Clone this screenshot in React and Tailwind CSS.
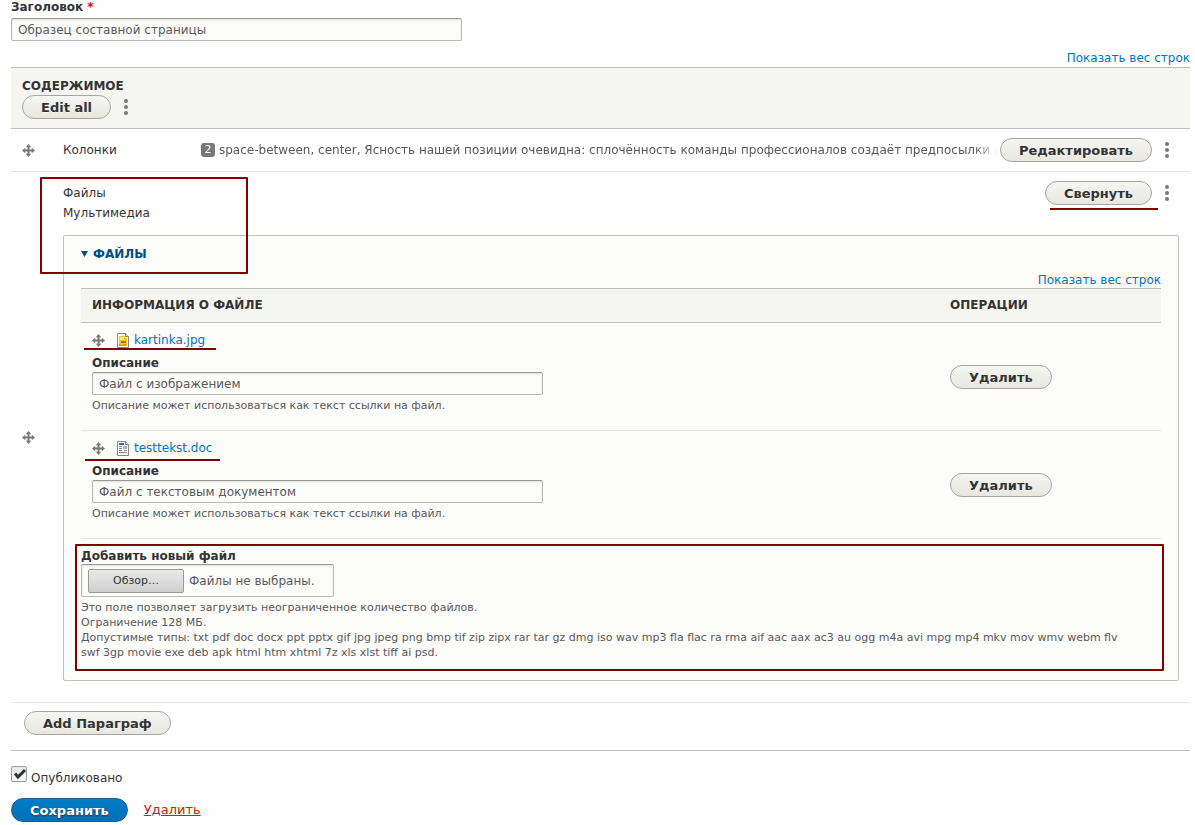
import { useRef } from 'react';
import clsx from 'clsx';

const files = [
    { id: 'kartinka', name: 'kartinka.jpg', kind: 'image', description: 'Файл с изображением', mark: 'top-[25px] left-[3px] w-[132px]' },
    { id: 'testtekst', name: 'testtekst.doc', kind: 'doc', description: 'Файл с текстовым документом', mark: 'top-7 left-1 w-[135px]' },
];

function Button({ primary, className, children, ...props }) {
    return (
        <button
            type="button"
            className={clsx(
                'h-6 shrink-0 rounded-full border px-[18px] pt-px text-[13px] leading-[21px] font-bold whitespace-nowrap cursor-pointer',
                primary
                    ? 'border-[#1e5c90] bg-linear-to-b from-[#007bc6] to-[#0071b8] text-white text-shadow-[0_1px_2px_rgba(0,0,0,0.5)]'
                    : 'border-[#a6a6a6] bg-linear-to-b from-[#f6f6f3] to-[#e7e7df] text-[#333] text-shadow-[0_1px_0_rgba(255,255,255,0.6)]',
                className
            )}
            {...props}
        >
            {children}
        </button>
    );
}

function MoreButton() {
    return (
        <button type="button" aria-label="Ещё" className="flex h-6 w-4 shrink-0 items-center justify-center cursor-pointer">
            <svg width="4" height="16" viewBox="0 0 4 16" fill="#787878">
                <circle cx="2" cy="2" r="2" />
                <circle cx="2" cy="8" r="2" />
                <circle cx="2" cy="14" r="2" />
            </svg>
        </button>
    );
}

function DragHandle() {
    return (
        <a href="#drag" aria-label="Переместить" className="inline-block cursor-move align-middle">
            <svg width="13" height="13" viewBox="0 0 13 13" className="block">
                <path d="M2 6.5h9M6.5 2v9" stroke="#787878" strokeWidth="2" />
                <path d="M6.5 0 9.2 3.2H3.8zM6.5 13 3.8 9.8h5.4zM0 6.5 3.2 3.8v5.4zM13 6.5 9.8 9.2V3.8z" fill="#787878" />
            </svg>
        </a>
    );
}

function FileIcon({ kind }) {
    return (
        <svg width="12" height="15" viewBox="0 0 12 15" className="shrink-0">
            <path d="M.5.5h8l3 3v11H.5z" fill="#fff" stroke="#858585" />
            <path d="M8.5.5v3h3" fill="#ddd" stroke="#858585" />
            {kind === 'image' ? (
                <>
                    <path d="M2 3h6v2h2v8H2z" fill="#f3c817" />
                    <path d="M3 4h4v3H3z" fill="#fbe88a" />
                    <path d="M4 8h5v2H4z" fill="#a8741a" />
                    <path d="M2 11l2 1 3-1 3 1v1H2z" fill="#d99a08" />
                </>
            ) : (
                <>
                    <path d="M2 2h5v2H2z" fill="#1a73c8" />
                    <path d="M2 5.5h3M2 7.5h3M2 9.5h3M2 11.5h8M7 9.5h3" stroke="#8a8a8a" />
                    <path d="M6 5h4v3H6z" fill="#9fb4cc" />
                </>
            )}
        </svg>
    );
}

function TextInput({ id, value }) {
    return (
        <input
            id={id}
            type="text"
            defaultValue={value}
            className="block h-[23px] w-[451px] max-w-full rounded-xs border border-[#b8b8b8] border-t-[#999] bg-[#fcfcfa] px-1.5 text-[12px] text-[#595959] shadow-[inset_0_1px_2px_rgba(0,0,0,0.12)]"
        />
    );
}

function WeightToggle() {
    return (
        <div className="text-right leading-4">
            <a href="#weights" className="text-[#0074bd]">Показать вес строк</a>
        </div>
    );
}

function FileRow({ file }) {
    return (
        <tr className="border-b border-[#e6e4df]">
            <td className="relative px-[11px] pt-2 pb-[17px]">
                <div className="flex h-[18px] items-center">
                    <DragHandle />
                    <span className="ml-3 flex items-center gap-[5px]">
                        <FileIcon kind={file.kind} />
                        <a href={`#${file.id}`} className="text-[#0074bd]">{file.name}</a>
                    </span>
                </div>
                <div className={clsx('absolute h-0.5 bg-[#800000]', file.mark)} />
                <label htmlFor={file.id} className="mt-[5px] block w-fit leading-[18px] font-bold">Описание</label>
                <TextInput id={file.id} value={file.description} />
                <p className="mt-[3px] text-[11px] leading-[15px] text-[#595959]">
                    Описание может использоваться как текст ссылки на файл.
                </p>
            </td>
            <td className="px-[11px] align-middle">
                <Button>Удалить</Button>
            </td>
        </tr>
    );
}

function UploadField() {
    const inputRef = useRef(null);

    return (
        <div className="relative mt-[9px]">
            <label htmlFor="upload" className="block w-fit leading-4 font-bold">Добавить новый файл</label>
            <div className="flex h-[33px] w-[253px] items-center rounded-xs border border-[#b8b8b8] border-t-[#999] px-1.5 text-[#595959] shadow-[inset_0_1px_2px_rgba(0,0,0,0.12)]">
                <input ref={inputRef} id="upload" type="file" multiple className="hidden" />
                <button
                    type="button"
                    onClick={() => inputRef.current.click()}
                    className="mr-[5px] h-6 w-24 rounded-xs border border-[#999] bg-linear-to-b from-[#e9e9e9] to-[#cfcfcf] pt-px text-[11px] text-[#333]"
                >
                    Обзор…
                </button>
                Файлы не выбраны.
            </div>
            <div className="mt-[3px] pr-6 text-[11px] leading-[15px] text-[#595959]">
                <p>Это поле позволяет загрузить неограниченное количество файлов.</p>
                <p>Ограничение 128 МБ.</p>
                <p>
                    Допустимые типы: txt pdf doc docx ppt pptx gif jpg jpeg png bmp tif zip zipx rar tar gz dmg iso wav mp3 fla flac ra rma aif aac aax ac3 au ogg m4a avi mpg mp4 mkv mov wmv webm flv swf 3gp movie exe deb apk html htm xhtml 7z xls xlst tiff ai psd.
                </p>
            </div>
            <div className="pointer-events-none absolute -top-1 -right-[3px] -bottom-[11px] -left-1.5 rounded-[1px] border-2 border-[#800000]" />
        </div>
    );
}

function FilesPanel() {
    return (
        <details open className="mt-3 rounded-xs border border-[#bfbfbf] bg-[#fcfcfa] px-[17px] pb-5">
            <summary className="flex h-9 cursor-pointer list-none items-center gap-[5px] font-bold text-[#004f80] uppercase">
                <svg width="7" height="6" viewBox="0 0 7 6" fill="#004f80">
                    <path d="M0 0h7L3.5 6z" />
                </svg>
                Файлы
            </summary>
            <WeightToggle />
            <table className="w-full border-collapse">
                <thead>
                    <tr className="border-y border-[#bfbfba] bg-[#f5f5f2] text-left leading-[33px] uppercase">
                        <th className="px-[11px]">Информация о файле</th>
                        <th className="w-[222px] px-[11px]">Операции</th>
                    </tr>
                </thead>
                <tbody>
                    {files.map((file) => (
                        <FileRow key={file.id} file={file} />
                    ))}
                </tbody>
            </table>
            <UploadField />
        </details>
    );
}

function ContentTable() {
    return (
        <table className="w-full table-fixed border-collapse">
            <colgroup>
                <col className="w-[52px]" />
                <col />
            </colgroup>
            <thead>
                <tr className="border-y border-[#bfbfba] bg-[#f5f5f2] text-left">
                    <th colSpan={2} className="px-[11px] py-[9px]">
                        <div className="leading-[18px] uppercase">Содержимое</div>
                        <div className="flex items-center gap-[7px]">
                            <Button>Edit all</Button>
                            <MoreButton />
                        </div>
                    </th>
                </tr>
            </thead>
            <tbody>
                <tr className="border-b border-[#e6e4df]">
                    <td className="pl-[11px]">
                        <DragHandle />
                    </td>
                    <td className="py-[9px] pr-[15px]">
                        <div className="flex items-center">
                            <div className="w-[138px] shrink-0">Колонки</div>
                            <div className="flex min-w-0 flex-1 items-center gap-1 overflow-hidden text-[#595959] mask-r-from-[calc(100%-24px)] mask-r-to-100%">
                                <span className="h-3.5 w-3.5 shrink-0 rounded-[3px] bg-[#787878] text-center text-[11px] leading-3.5 text-white">2</span>
                                <span className="whitespace-nowrap">
                                    space-between, center, Ясность нашей позиции очевидна: сплочённость команды профессионалов создаёт предпосылки для
                                </span>
                            </div>
                            <Button className="mr-[7px] ml-0.5">Редактировать</Button>
                            <MoreButton />
                        </div>
                    </td>
                </tr>
                <tr className="border-b border-[#e6e4df]">
                    <td className="pl-[11px]">
                        <DragHandle />
                    </td>
                    <td className="relative pt-[9px] pr-[11px] pb-[21px]">
                        <div className="flex items-start justify-between">
                            <div className="mt-0.5 leading-5">
                                <div>Файлы</div>
                                <div>Мультимедиа</div>
                            </div>
                            <div className="relative flex gap-[7px] pr-1">
                                <Button>Свернуть</Button>
                                <MoreButton />
                                <div className="absolute top-[27px] right-[21px] left-[5px] h-0.5 bg-[#800000]" />
                            </div>
                        </div>
                        <FilesPanel />
                        <div className="pointer-events-none absolute top-[5px] -left-[23px] h-[97px] w-[208px] rounded-[1px] border-2 border-[#800000]" />
                    </td>
                </tr>
            </tbody>
        </table>
    );
}

export default function App() {
    return (
        <form
            onSubmit={(e) => e.preventDefault()}
            className="bg-white pr-[5px] pl-[11px] font-['DejaVu_Sans',sans-serif] text-[12px] text-[#333]"
        >
            <label htmlFor="title" className="block w-fit pb-1 leading-3.5 font-bold">
                Заголовок <span className="text-[#e00]">*</span>
            </label>
            <TextInput id="title" value="Образец составной страницы" />
            <div className="mt-[9px] mb-px">
                <WeightToggle />
            </div>
            <ContentTable />
            <div className="border-b border-[#bfbfba] px-[13px] pt-2 pb-[15px]">
                <Button>Add Параграф</Button>
            </div>
            <div className="mt-[15px] flex gap-1">
                <span className="relative h-4 w-4">
                    <input
                        id="published"
                        type="checkbox"
                        defaultChecked
                        className="peer block h-4 w-4 appearance-none rounded-xs border border-[#999] bg-linear-to-b from-[#e9e9e9] to-[#f9f9f9]"
                    />
                    <svg viewBox="0 0 16 16" className="pointer-events-none absolute inset-0 hidden peer-checked:block">
                        <path d="M4 7.5l3 3.5 7-7" fill="none" stroke="#2e3436" strokeWidth="3" />
                    </svg>
                </span>
                <label htmlFor="published" className="mt-1 leading-4">Опубликовано</label>
            </div>
            <div className="mt-3 flex items-center gap-4 pb-[3px]">
                <Button primary type="submit">Сохранить</Button>
                <a href="#delete" className="text-[13px] text-[#c72100] underline">Удалить</a>
            </div>
        </form>
    );
}
